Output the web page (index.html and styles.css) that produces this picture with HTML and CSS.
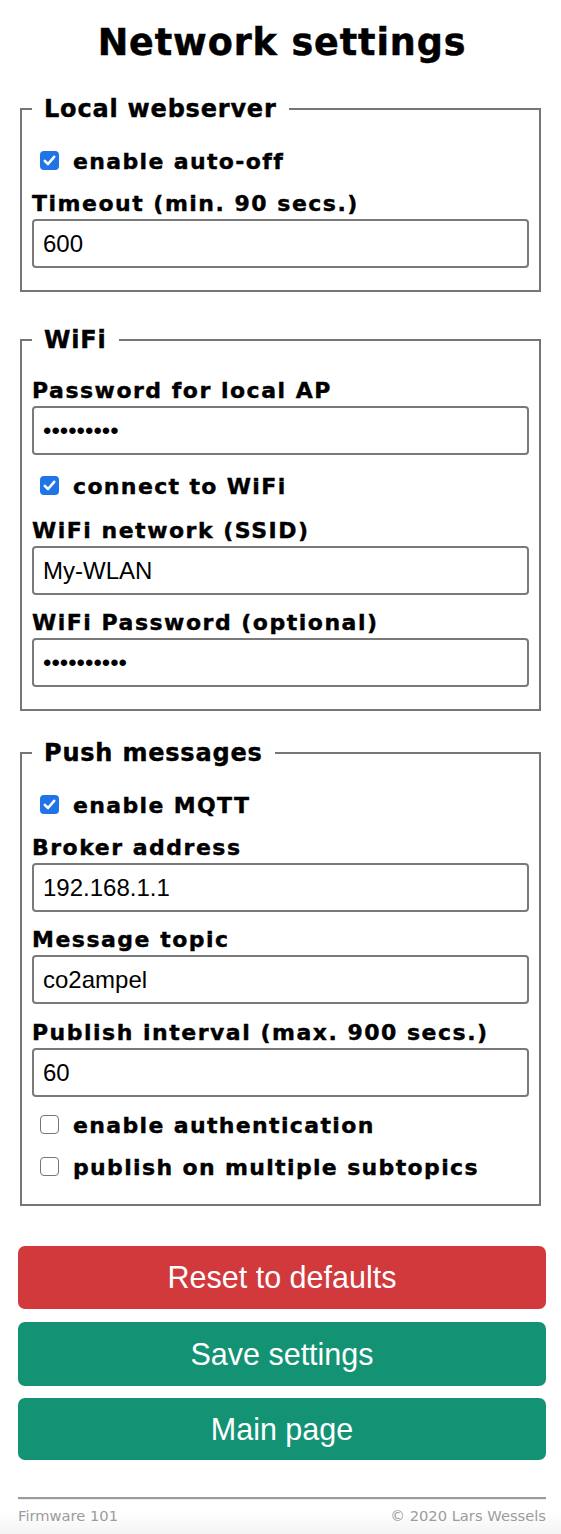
FILE: index.html
```html
<!DOCTYPE html>
<html lang="en">
<head>
<meta charset="utf-8">
<title>Network settings</title>
<link rel="stylesheet" href="styles.css">
</head>
<body>
<div class="page">
  <h1 class="title">Network settings</h1>
  <form class="form">
    <fieldset class="group g1">
      <legend class="legend">Local webserver</legend>
      <label class="check"><span class="box on"><svg viewBox="0 0 19 19" width="19" height="19"><path d="M4.8 9.8 L8 13 L14.2 5.8" fill="none" stroke="#fff" stroke-width="2.6" stroke-linecap="round" stroke-linejoin="round"/></svg></span><span class="check-text">enable auto-off</span></label>
      <label class="field-label" for="timeout">Timeout (min. 90 secs.)</label>
      <input class="text-input" id="timeout" type="text" value="600">
    </fieldset>

    <fieldset class="group g2">
      <legend class="legend">WiFi</legend>
      <label class="field-label first" for="appw">Password for local AP</label>
      <input class="text-input" id="appw" type="password" value="123456789">
      <label class="check after-input"><span class="box on"><svg viewBox="0 0 19 19" width="19" height="19"><path d="M4.8 9.8 L8 13 L14.2 5.8" fill="none" stroke="#fff" stroke-width="2.6" stroke-linecap="round" stroke-linejoin="round"/></svg></span><span class="check-text">connect to WiFi</span></label>
      <label class="field-label after-check" for="ssid">WiFi network (SSID)</label>
      <input class="text-input" id="ssid" type="text" value="My-WLAN">
      <label class="field-label spaced" for="wpw">WiFi Password (optional)</label>
      <input class="text-input" id="wpw" type="password" value="1234567890">
    </fieldset>

    <fieldset class="group g3">
      <legend class="legend">Push messages</legend>
      <label class="check"><span class="box on"><svg viewBox="0 0 19 19" width="19" height="19"><path d="M4.8 9.8 L8 13 L14.2 5.8" fill="none" stroke="#fff" stroke-width="2.6" stroke-linecap="round" stroke-linejoin="round"/></svg></span><span class="check-text">enable MQTT</span></label>
      <label class="field-label" for="broker">Broker address</label>
      <input class="text-input" id="broker" type="text" value="192.168.1.1">
      <label class="field-label spaced" for="topic">Message topic</label>
      <input class="text-input" id="topic" type="text" value="co2ampel">
      <label class="field-label spaced wide" for="interval">Publish interval (max. 900 secs.)</label>
      <input class="text-input" id="interval" type="text" value="60">
      <label class="check"><span class="box"></span><span class="check-text">enable authentication</span></label>
      <label class="check"><span class="box"></span><span class="check-text">publish on multiple subtopics</span></label>
    </fieldset>

    <div class="actions">
      <button type="button" class="btn btn-red btn-reset">Reset to defaults</button>
      <button type="button" class="btn btn-green btn-save">Save settings</button>
      <a class="btn btn-green btn-main" href="#">Main page</a>
    </div>
  </form>
</div>
<footer class="site-footer">
  <div class="footer-inner">
    <hr class="rule">
    <div class="footer-row">
      <span>Firmware 101</span>
      <span>© 2020 Lars Wessels</span>
    </div>
  </div>
</footer>
</body>
</html>
```
FILE: styles.css
```css
html, body {
  margin: 0;
  padding: 0;
  background: #fff;
}

body {
  font-family: "DejaVu Sans", Verdana, sans-serif;
  color: #000;
}

.page {
  width: 528px;
  margin-left: 18px;
}

.title {
  margin: 21px 0 0;
  font-size: 36.5px;
  line-height: normal;
  font-weight: bold;
  letter-spacing: 0.9px;
  -webkit-text-stroke: 0.5px #000;
  text-align: center;
}

.form {
  margin: 0;
}

.group {
  box-sizing: border-box;
  width: 521px;
  min-width: 0;
  margin: 0 0 0 2px;
  border: 2px solid #767676;
  padding: 18px 10px 14px;
}

.g1 { margin-top: 31px; }
.g2 { margin-top: 34px; }
.g3 { margin-top: 28px; padding-bottom: 15px; }

.legend {
  padding: 0 12px;
  font-size: 24px;
  font-weight: bold;
  line-height: normal;
  letter-spacing: 0.8px;
  -webkit-text-stroke: 0.4px #000;
}

.field-label {
  display: block;
  margin-top: 6px;
  font-size: 22px;
  font-weight: bold;
  line-height: 30px;
  letter-spacing: 1.5px;
  -webkit-text-stroke: 0.4px #000;
}

.field-label.first {
  margin-top: 4px;
}

.field-label.after-check {
  margin-top: 8px;
}

.field-label.spaced {
  margin-top: 13px;
}

.field-label.wide {
  margin-top: 14px;
}

.text-input {
  display: block;
  box-sizing: border-box;
  width: 100%;
  height: 49px;
  margin: 0 0 8px;
  padding: 0 9px;
  border: 2px solid #7a7a7a;
  border-radius: 4px;
  background: #fff;
  font-family: "Liberation Sans", Arial, sans-serif;
  font-size: 24px;
  color: #000;
  outline: none;
}

.check {
  display: flex;
  align-items: center;
  height: 42px;
  padding-left: 8px;
}

.check.after-input {
  margin-top: 11px;
}

.box {
  box-sizing: border-box;
  flex: none;
  width: 19px;
  height: 19px;
  margin: 0 14px 4px 0;
  border: 1.5px solid #767676;
  border-radius: 4px;
  background: #fff;
}

.box.on {
  border: none;
  background: #1f75e8;
}

.box svg {
  display: block;
}

.check-text {
  font-size: 22px;
  font-weight: bold;
  line-height: 42px;
  letter-spacing: 1.35px;
  -webkit-text-stroke: 0.4px #000;
}

.actions {
  display: flex;
  flex-direction: column;
  margin-top: 40px;
}

.btn {
  display: flex;
  align-items: center;
  justify-content: center;
  box-sizing: border-box;
  width: 528px;
  margin: 0;
  padding: 0;
  border: none;
  border-radius: 7px;
  font-family: "Liberation Sans", Arial, sans-serif;
  font-size: 30.5px;
  color: #fff;
  text-decoration: none;
}

.btn-red { background: #d2393d; }
.btn-green { background: #149374; }

.btn-reset { height: 63px; }
.btn-save { height: 64px; margin-top: 13px; }
.btn-main { height: 62px; margin-top: 12px; }

.site-footer {
  margin-top: 37px;
  background: linear-gradient(to bottom, #fff 0, #fff 14px, #f2f2f2 100%);
  padding-bottom: 14px;
}

.footer-inner {
  width: 528px;
  margin-left: 18px;
}

.rule {
  margin: 0;
  height: 0;
  border: none;
  border-top: 2px solid #9b9b9b;
  border-bottom: 1px solid #ececec;
}

.footer-row {
  display: flex;
  justify-content: space-between;
  margin-top: 7px;
  font-size: 14.7px;
  line-height: normal;
  color: #9c9c9c;
}
```
